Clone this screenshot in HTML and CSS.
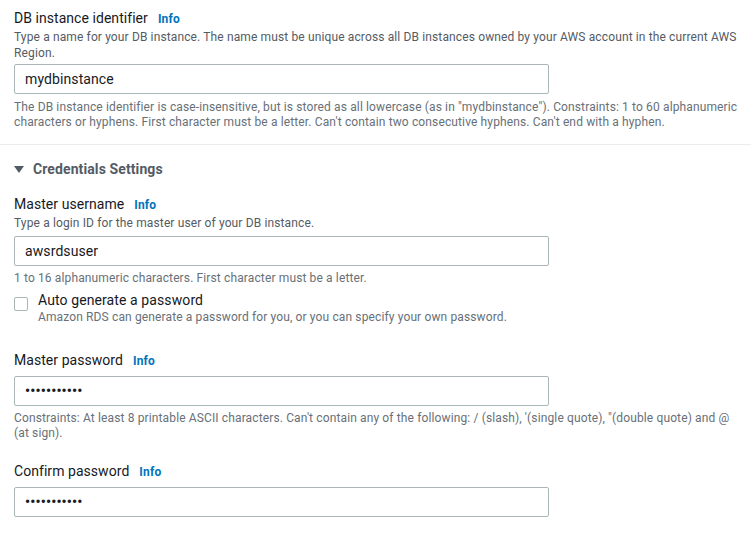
FILE: index.html
```html
<!DOCTYPE html>
<html lang="en">
<head>
<meta charset="utf-8">
<title>Credentials Settings</title>
<link rel="stylesheet" href="styles.css">
</head>
<body>
<div class="page">
  <section class="field field-top">
    <div class="label-row"><label class="label" for="dbid">DB instance identifier</label><a class="info" href="#">Info</a></div>
    <p class="desc">Type a name for your DB instance. The name must be unique across all DB instances owned by your AWS account in the current AWS Region.</p>
    <input class="text-input" id="dbid" type="text" value="mydbinstance">
    <p class="hint">The DB instance identifier is case-insensitive, but is stored as all lowercase (as in "mydbinstance"). Constraints: 1 to 60 alphanumeric characters or hyphens. First character must be a letter. Can't contain two consecutive hyphens. Can't end with a hyphen.</p>
  </section>

  <hr class="divider">

  <section class="group">
    <div class="group-head">
      <svg class="caret" width="10" height="7" viewBox="0 0 10 7"><polygon points="0,0 10,0 5,7" fill="#545b64"/></svg>
      <span class="group-title">Credentials Settings</span>
    </div>

    <div class="field">
      <div class="label-row"><label class="label" for="user">Master username</label><a class="info" href="#">Info</a></div>
      <p class="desc">Type a login ID for the master user of your DB instance.</p>
      <input class="text-input" id="user" type="text" value="awsrdsuser">
      <p class="hint">1 to 16 alphanumeric characters. First character must be a letter.</p>
      <div class="check-row">
        <input class="checkbox" type="checkbox" id="auto">
        <div class="check-text">
          <label class="check-label" for="auto">Auto generate a password</label>
          <p class="hint">Amazon RDS can generate a password for you, or you can specify your own password.</p>
        </div>
      </div>
    </div>

    <div class="field field-pw">
      <div class="label-row"><label class="label" for="pw">Master password</label><a class="info" href="#">Info</a></div>
      <div class="text-input pw" id="pw">•••••••••••</div>
      <p class="hint">Constraints: At least 8 printable ASCII characters. Can't contain any of the following: / (slash), '(single quote), "(double quote) and @ (at sign).</p>
    </div>

    <div class="field field-pw2">
      <div class="label-row"><label class="label" for="pw2">Confirm password</label><a class="info" href="#">Info</a></div>
      <div class="text-input pw" id="pw2">•••••••••••</div>
    </div>
  </section>
</div>
</body>
</html>
```

FILE: styles.css
```css
* { box-sizing: border-box; }
html, body { margin: 0; padding: 0; background: #ffffff; }
body {
  font-family: Roboto, "Liberation Sans", Arial, sans-serif;
  color: #16191f;
}
.page { padding: 8px 0 0 14px; }
p { margin: 0; }

.label-row { display: flex; align-items: baseline; gap: 10px; height: 20px; }
.label { font-size: 14px; line-height: 20px; color: #16191f; letter-spacing: 0.05px; }
.info { font-size: 12px; font-weight: 700; color: #0073bb; text-decoration: none; letter-spacing: 0.2px; }

.desc { font-size: 12px; line-height: 16px; color: #545b64; margin-top: 1px; width: 728px; letter-spacing: 0.13px; }
.hint { font-size: 12px; line-height: 15px; color: #687078; width: 730px; letter-spacing: 0.13px; }

.text-input {
  display: block;
  width: 535px;
  height: 30px;
  border: 1px solid #aab7b8;
  border-radius: 2px;
  padding: 0 10px;
  font-family: inherit;
  font-size: 14px;
  letter-spacing: 0.1px;
  color: #16191f;
  background: #fff;
  outline: none;
}
.field-top .text-input { margin-top: 3px; }
.field-top .hint { margin-top: 6px; }

.divider { border: 0; border-top: 1px solid #eaeded; margin: 14px 0 0 -14px; height: 0; }

.group-head { display: flex; align-items: center; gap: 9px; height: 20px; margin-top: 14px; }
.caret { display: block; }
.group-title { font-size: 14px; font-weight: 700; color: #545b64; line-height: 20px; letter-spacing: 0.1px; }

.group .field { margin-top: 15px; }
.group .field .text-input { margin-top: 5px; }
.group .field > .hint { margin-top: 5px; }

.check-row { display: flex; gap: 10px; margin-top: 4px; }
.checkbox {
  appearance: none;
  -webkit-appearance: none;
  margin: 7px 0 0 0;
  width: 14px;
  height: 14px;
  border: 1px solid #aab7b8;
  border-radius: 2px;
  background: #fff;
  flex: none;
}
.check-label { display: block; font-size: 14px; line-height: 20px; color: #16191f; letter-spacing: 0.1px; }
.check-text .hint { width: auto; }

.group .field-pw { margin-top: 25px; }
.group .field-pw .text-input { margin-top: 6px; }
.group .field-pw > .hint { margin-top: 5px; width: 724px; }
.group .field-pw2 { margin-top: 20px; }
.group .field-pw2 .text-input { margin-top: 6px; }

.pw {
  display: flex;
  align-items: center;
  font-size: 14px;
  letter-spacing: 0.2px;
  font-weight: 700;
}
```
